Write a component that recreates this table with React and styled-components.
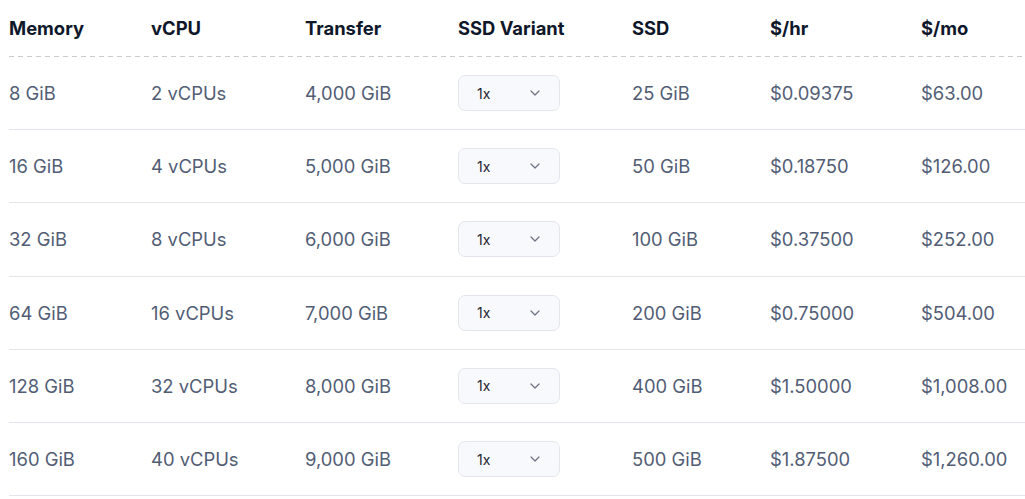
import React from "react";
import styled, { createGlobalStyle } from "styled-components";

const GlobalStyle = createGlobalStyle`
  body {
    margin: 0;
    background: #fff;
    font-family: Inter, "Noto Sans", sans-serif;
  }
`;

const plans = [
  { memory: "8 GiB", vcpu: "2 vCPUs", transfer: "4,000 GiB", ssd: "25 GiB", hr: "$0.09375", mo: "$63.00" },
  { memory: "16 GiB", vcpu: "4 vCPUs", transfer: "5,000 GiB", ssd: "50 GiB", hr: "$0.18750", mo: "$126.00" },
  { memory: "32 GiB", vcpu: "8 vCPUs", transfer: "6,000 GiB", ssd: "100 GiB", hr: "$0.37500", mo: "$252.00" },
  { memory: "64 GiB", vcpu: "16 vCPUs", transfer: "7,000 GiB", ssd: "200 GiB", hr: "$0.75000", mo: "$504.00" },
  { memory: "128 GiB", vcpu: "32 vCPUs", transfer: "8,000 GiB", ssd: "400 GiB", hr: "$1.50000", mo: "$1,008.00" },
  { memory: "160 GiB", vcpu: "40 vCPUs", transfer: "9,000 GiB", ssd: "500 GiB", hr: "$1.87500", mo: "$1,260.00" },
];

const headers = ["Memory", "vCPU", "Transfer", "SSD Variant", "SSD", "$/hr", "$/mo"];

const Chevron = () => (
  <svg width="10" height="6" viewBox="0 0 10 6" fill="none">
    <path d="M1 1l4 4 4-4" stroke="#6b7280" strokeWidth="1.2" strokeLinecap="round" strokeLinejoin="round" />
  </svg>
);

const PricingTable = () => (
  <Table>
    <HeadRow>
      {headers.map((h) => (
        <HeadCell key={h}>{h}</HeadCell>
      ))}
    </HeadRow>
    {plans.map((p) => (
      <Row key={p.memory}>
        <Cell>{p.memory}</Cell>
        <Cell>{p.vcpu}</Cell>
        <Cell>{p.transfer}</Cell>
        <Cell>
          <Select>
            <span>1x</span>
            <Chevron />
          </Select>
        </Cell>
        <Cell>{p.ssd}</Cell>
        <Cell>{p.hr}</Cell>
        <Cell>{p.mo}</Cell>
      </Row>
    ))}
  </Table>
);

const App = () => (
  <>
    <GlobalStyle />
    <PricingTable />
  </>
);

const Table = styled.div`
  margin-left: 9px;
  width: 1016px;
`;

const columns = "142px 154px 153px 174px 138px 151px 1fr";

const HeadRow = styled.div`
  display: grid;
  grid-template-columns: ${columns};
  align-items: center;
  height: 56px;
  background-image: linear-gradient(to right, #c9ccd1 55%, transparent 55%);
  background-size: 9px 1px;
  background-repeat: repeat-x;
  background-position: left bottom;
  padding-bottom: 1px;
`;

const HeadCell = styled.div`
  font-size: 18.4px;
  font-weight: 700;
  color: #0f172a;
`;

const Row = styled.div`
  display: grid;
  grid-template-columns: ${columns};
  align-items: center;
  height: 72.2px;
  border-bottom: 1px solid #e2e5ea;
`;

const Cell = styled.div`
  font-size: 18.4px;
  color: #525d75;
`;

const Select = styled.div`
  display: flex;
  align-items: center;
  justify-content: space-between;
  width: 102px;
  height: 36px;
  box-sizing: border-box;
  padding: 0 19px 0 18px;
  background: #f8f9fc;
  border: 1px solid #e3e6ec;
  border-radius: 7px;
  font-size: 14px;
  color: #1e2433;
`;

export default App;
